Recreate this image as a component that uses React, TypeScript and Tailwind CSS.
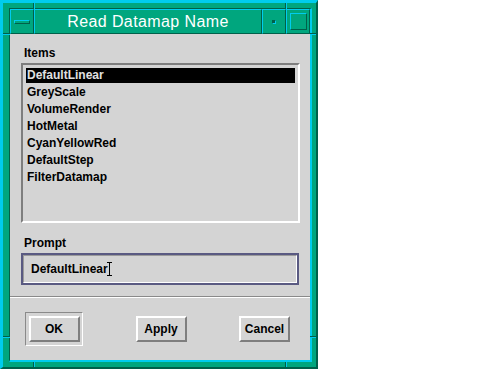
import React from "react";

const items = [
  "DefaultLinear",
  "GreyScale",
  "VolumeRender",
  "HotMetal",
  "CyanYellowRed",
  "DefaultStep",
  "FilterDatamap",
];

function Notch({ className }: { className: string }) {
  return <div className={`absolute ${className}`} />;
}

function PushButton({ label }: { label: string }) {
  return (
    <div className="flex h-[26px] w-[51px] items-center justify-center border-2 border-t-white border-l-white border-b-[#7e7e7e] border-r-[#7e7e7e] text-[12px] font-bold text-black">
      {label}
    </div>
  );
}

export default function App() {
  return (
    <div className="min-h-screen bg-white font-['Liberation_Sans',Arial,sans-serif]">
      <div className="relative h-[369px] w-[318px] border-t-[3px] border-l-[3px] border-b-2 border-r-2 border-t-[#00ccee] border-l-[#00ccee] border-b-[#00604a] border-r-[#00604a] bg-[#00a67e] pt-[5px] pl-[6px] pr-[4px] pb-[5px]">
        {/* resize handle notches */}
        <Notch className="left-[30px] top-0 h-[6px] w-px bg-[#00604a]" />
        <Notch className="left-[31px] top-0 h-[6px] w-px bg-[#00ccee]" />
        <Notch className="left-[282px] top-0 h-[6px] w-px bg-[#00604a]" />
        <Notch className="left-[283px] top-0 h-[6px] w-px bg-[#00ccee]" />
        <Notch className="left-0 top-[30px] h-px w-[7px] bg-[#00604a]" />
        <Notch className="left-0 top-[31px] h-px w-[7px] bg-[#00ccee]" />
        <Notch className="right-0 top-[30px] h-px w-[6px] bg-[#00604a]" />
        <Notch className="right-0 top-[31px] h-px w-[6px] bg-[#00ccee]" />
        <Notch className="left-0 top-[333px] h-px w-[7px] bg-[#00604a]" />
        <Notch className="left-0 top-[334px] h-px w-[7px] bg-[#00ccee]" />
        <Notch className="right-0 top-[333px] h-px w-[6px] bg-[#00604a]" />
        <Notch className="right-0 top-[334px] h-px w-[6px] bg-[#00ccee]" />
        <Notch className="bottom-0 left-[30px] h-[5px] w-px bg-[#00604a]" />
        <Notch className="bottom-0 left-[31px] h-[5px] w-px bg-[#00ccee]" />
        <Notch className="bottom-0 left-[282px] h-[5px] w-px bg-[#00604a]" />
        <Notch className="bottom-0 left-[283px] h-[5px] w-px bg-[#00ccee]" />

        <div className="flex h-full flex-col border-t border-l border-t-[#00604a] border-l-[#00604a] border-b-2 border-r-2 border-b-[#00ccee] border-r-[#00ccee]">
          {/* title bar */}
          <div className="flex h-[25px] shrink-0">
            <div className="flex w-[24px] items-center justify-center border border-t-[#00ccee] border-l-[#00ccee] border-b-[#00604a] border-r-[#00604a]">
              <div className="h-[4px] w-[16px] border border-t-[#00ccee] border-l-[#00ccee] border-b-[#00604a] border-r-[#00604a]" />
            </div>
            <div className="flex flex-1 items-center justify-center border border-t-[#00ccee] border-l-[#00ccee] border-b-[#00604a] border-r-[#00604a] text-[16px] tracking-[0.4px] text-white">
              Read Datamap Name
            </div>
            <div className="flex w-[24px] items-center justify-center border border-t-[#00ccee] border-l-[#00ccee] border-b-[#00604a] border-r-[#00604a]">
              <div className="h-[4px] w-[4px] border border-t-[#00604a] border-l-[#00604a] border-b-[#00ccee] border-r-[#00ccee] bg-[#00604a]" />
            </div>
            <div className="flex w-[24px] items-center justify-center border border-t-[#00ccee] border-l-[#00ccee] border-b-[#00604a] border-r-[#00604a]">
              <div className="h-[17px] w-[17px] border border-t-[#00ccee] border-l-[#00ccee] border-b-[#00604a] border-r-[#00604a]" />
            </div>
          </div>

          {/* client area */}
          <div className="flex flex-1 flex-col bg-[#d4d4d4] text-black">
            <div className="flex flex-col pt-[12px] pl-[11px] pr-[10px]">
              <div className="ml-[3px] h-[14px] text-[12px] font-bold leading-[14px]">
                Items
              </div>
              <div className="mt-[3px] h-[160px] w-[279px] border-2 border-t-[#7e7e7e] border-l-[#7e7e7e] border-b-white border-r-white p-[3px]">
                <div className="flex flex-col gap-[2px]">
                  {items.map((name, i) => (
                    <div
                      key={name}
                      className={`h-[15px] pl-[1px] text-[12px] font-bold leading-[15px] ${
                        i === 0 ? "bg-black text-[#e0e0e0]" : "text-black"
                      }`}
                    >
                      {name}
                    </div>
                  ))}
                </div>
              </div>
              <div className="ml-[3px] mt-[13px] h-[14px] text-[12px] font-bold leading-[14px]">
                Prompt
              </div>
              <div className="mt-[3px] h-[32px] w-[278px] border-2 border-[#5a5a82]">
                <div className="flex h-full items-center border border-t-[#9a9a9a] border-l-[#9a9a9a] border-b-white border-r-white pl-[7px] text-[12px] font-bold">
                  DefaultLinear
                  <span className="-ml-px flex h-[14px] w-[5px] flex-col items-center justify-between">
                    <span className="h-px w-[5px] bg-black" />
                    <span className="w-px flex-1 bg-black" />
                    <span className="h-px w-[5px] bg-black" />
                  </span>
                </div>
              </div>
            </div>

            <div className="mt-[11px] border-t border-b border-t-[#8a8a8a] border-b-white" />

            <div className="mt-[14px] flex items-start justify-between pl-[15px] pr-[20px]">
              <div className="flex h-[34px] w-[58px] items-center justify-center border border-t-[#8a8a8a] border-l-[#8a8a8a] border-b-white border-r-white">
                <PushButton label="OK" />
              </div>
              <div className="pt-[4px]">
                <PushButton label="Apply" />
              </div>
              <div className="pt-[4px]">
                <PushButton label="Cancel" />
              </div>
            </div>
          </div>
        </div>
      </div>
    </div>
  );
}
